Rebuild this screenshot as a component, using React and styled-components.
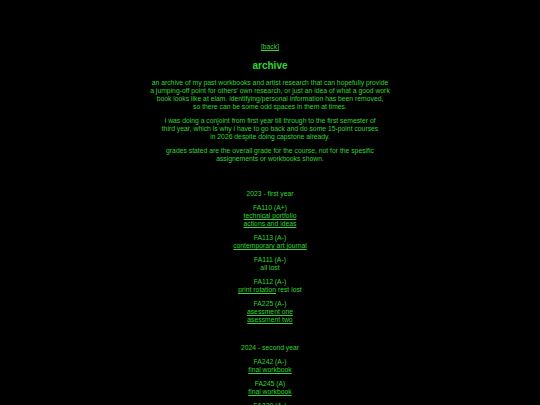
import React from "react";
import styled, { createGlobalStyle } from "styled-components";

const Global = createGlobalStyle`
  html, body { margin: 0; padding: 0; background: #000; }
  body {
    font-family: "Liberation Sans", Arial, sans-serif;
    color: #33d433;
  }
`;

const Page = styled.main`
  display: flex;
  flex-direction: column;
  align-items: center;
  text-align: center;
  padding-top: 43px;
  font-size: 6.8px;
  line-height: 8px;
`;

const Back = styled.a`
  color: inherit;
  text-decoration: underline;
`;

const Title = styled.h1`
  margin: 9px 0 7px;
  font-size: 10px;
  line-height: 12px;
  font-weight: bold;
`;

const Para = styled.p`
  margin: 0 0 6px;
`;

const Intro = styled.div`
  display: flex;
  flex-direction: column;
  align-items: center;
  margin-bottom: 21px;
`;

const Section = styled.section`
  display: flex;
  flex-direction: column;
  align-items: center;
  gap: 6px;
  margin-bottom: 20px;
`;

const Course = styled.div`
  display: flex;
  flex-direction: column;
  align-items: center;
`;

const Link = styled.a`
  color: inherit;
  text-decoration: underline;
`;

const years = [
  {
    title: "2023 - first year",
    courses: [
      { code: "FA110 (A+)", lines: [[{ l: "technical portfolio" }], [{ l: "actions and ideas" }]] },
      { code: "FA113 (A-)", lines: [[{ l: "contemporary art journal" }]] },
      { code: "FA111 (A-)", lines: [[{ t: "all lost" }]] },
      { code: "FA112 (A-)", lines: [[{ l: "print rotation" }, { t: " rest lost" }]] },
      { code: "FA225 (A-)", lines: [[{ l: "asessment one" }], [{ l: "asessment two" }]] },
    ],
  },
  {
    title: "2024 - second year",
    courses: [
      { code: "FA242 (A-)", lines: [[{ l: "final workbook" }]] },
      { code: "FA245 (A)", lines: [[{ l: "final workbook" }]] },
      { code: "FA230 (A-)", lines: [[{ l: "final workbook" }]] },
    ],
  },
];

export default function App() {
  return (
    <>
      <Global />
      <Page>
        <Back href="#">[back]</Back>
        <Title>archive</Title>
        <Intro>
          <Para>
            an archive of my past workbooks and artist research that can hopefully provide
            <br />
            a jumping-off point for others' own research, or just an idea of what a good work
            <br />
            book looks like at elam. identifying/personal information has been removed,
            <br />
            so there can be some odd spaces in them at times.
          </Para>
          <Para>
            I was doing a conjoint from first year till through to the first semester of
            <br />
            third year, which is why i have to go back and do some 15-point courses
            <br />
            in 2026 despite doing capstone already.
          </Para>
          <Para>
            grades stated are the overall grade for the course, not for the spesific
            <br />
            assignements or workbooks shown.
          </Para>
        </Intro>
        {years.map((y) => (
          <Section key={y.title}>
            <div>{y.title}</div>
            {y.courses.map((c, i) => (
              <Course key={i}>
                <div>{c.code}</div>
                {c.lines.map((line, j) => (
                  <div key={j}>
                    {line.map((p, k) =>
                      p.l ? (
                        <Link key={k} href="#">
                          {p.l}
                        </Link>
                      ) : (
                        <span key={k}>{p.t}</span>
                      )
                    )}
                  </div>
                ))}
              </Course>
            ))}
          </Section>
        ))}
      </Page>
    </>
  );
}
